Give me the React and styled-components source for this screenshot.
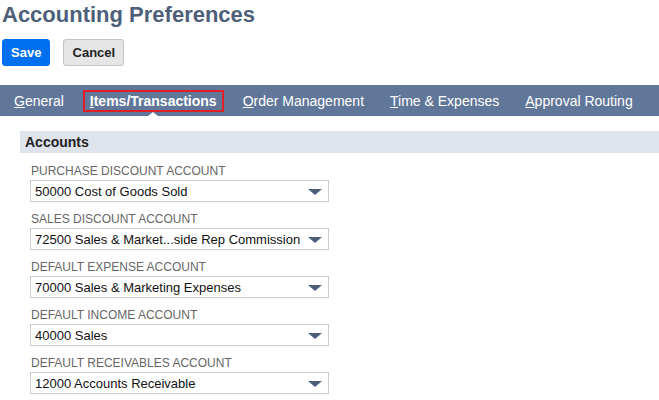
import React from "react";
import styled, { createGlobalStyle } from "styled-components";

const Global = createGlobalStyle`
  html, body { margin: 0; padding: 0; background: #fff; }
  body { font-family: Arial, "Liberation Sans", Helvetica, sans-serif; }
`;

const Page = styled.div`
  width: 659px;
  height: 400px;
  overflow: hidden;
  background: #fff;
`;

const Title = styled.h1`
  margin: 0;
  padding: 2px 0 0 2px;
  font-size: 22px;
  line-height: 26px;
  font-weight: bold;
  color: #4d5f79;
`;

const Actions = styled.div`
  display: flex;
  gap: 13px;
  padding: 11px 0 0 2px;
`;

const Button = styled.button`
  height: 27px;
  box-sizing: border-box;
  padding: 0 8px;
  font-family: Arial, "Liberation Sans", sans-serif;
  font-size: 13px;
  font-weight: bold;
  border-radius: 3px;
  border: 1px solid ${(p) => (p.$primary ? "#0070f0" : "#c4c4c4")};
  background: ${(p) => (p.$primary ? "#0070f0" : "#e5e5e5")};
  color: ${(p) => (p.$primary ? "#fff" : "#222")};
  min-width: ${(p) => (p.$primary ? "47px" : "61px")};
`;

const TabBar = styled.nav`
  margin-top: 19px;
  height: 31px;
  background: #607799;
  display: flex;
  align-items: center;
  padding-left: 14px;
`;

const Tab = styled.div`
  position: relative;
  color: #fff;
  font-size: 14px;
  font-weight: ${(p) => (p.$active ? "bold" : "normal")};
  margin-right: ${(p) => p.$gap}px;
  padding: ${(p) => (p.$active ? "2px 5px 2px 5px" : "0")};
  border: ${(p) => (p.$active ? "2px solid #e01f26" : "none")};
  line-height: 14px;
  u { text-decoration: underline; }
`;

const Caret = styled.span`
  position: absolute;
  left: 50%;
  margin-left: -6px;
  bottom: -7px;
  width: 0;
  height: 0;
  border-left: 6px solid transparent;
  border-right: 6px solid transparent;
  border-bottom: 5px solid #fff;
`;

const Section = styled.section`
  padding: 15px 0 0 20px;
`;

const SectionHeader = styled.div`
  height: 22px;
  background: #dfe3eb;
  display: flex;
  align-items: center;
  padding-left: 5px;
  font-size: 14px;
  font-weight: bold;
  color: #222;
`;

const Fields = styled.div`
  padding: 11px 0 0 10px;
  display: flex;
  flex-direction: column;
  gap: 10px;
`;

const Field = styled.div`
  display: flex;
  flex-direction: column;
  gap: 2px;
`;

const Label = styled.label`
  font-size: 12px;
  line-height: 14px;
  color: #666;
  text-transform: uppercase;
  padding-left: 1px;
`;

const Select = styled.div`
  width: 299px;
  height: 22px;
  box-sizing: border-box;
  border: 1px solid #cccccc;
  display: flex;
  align-items: center;
  justify-content: space-between;
  padding: 0 4px;
  font-size: 13px;
  color: #111;
`;

const Arrow = styled.span`
  width: 0;
  height: 0;
  border-left: 7px solid transparent;
  border-right: 7px solid transparent;
  border-top: 6px solid #4d5f79;
  margin-right: 2px;
  margin-top: 1px;
`;

const fields = [
  ["Purchase Discount Account", "50000 Cost of Goods Sold"],
  ["Sales Discount Account", "72500 Sales & Market...side Rep Commission"],
  ["Default Expense Account", "70000 Sales & Marketing Expenses"],
  ["Default Income Account", "40000 Sales"],
  ["Default Receivables Account", "12000 Accounts Receivable"],
];

const tabs = [
  { u: "G", rest: "eneral", gap: 19 },
  { u: "I", rest: "tems/Transactions", gap: 19 },
  { u: "O", rest: "rder Management", gap: 26 },
  { u: "T", rest: "ime & Expenses", gap: 26 },
  { u: "A", rest: "pproval Routing", gap: 0 },
];
tabs[1].active = true;

export default function App() {
  return (
    <Page>
      <Global />
      <Title>Accounting Preferences</Title>
      <Actions>
        <Button $primary>Save</Button>
        <Button>Cancel</Button>
      </Actions>
      <TabBar>
        {tabs.map((t) => (
          <Tab key={t.u} $active={t.active} $gap={t.gap}>
            <u>{t.u}</u>
            {t.rest}
            {t.active && <Caret />}
          </Tab>
        ))}
      </TabBar>
      <Section>
        <SectionHeader>Accounts</SectionHeader>
        <Fields>
          {fields.map(([l, v]) => (
            <Field key={l}>
              <Label>{l}</Label>
              <Select>
                <span>{v}</span>
                <Arrow />
              </Select>
            </Field>
          ))}
        </Fields>
      </Section>
    </Page>
  );
}
